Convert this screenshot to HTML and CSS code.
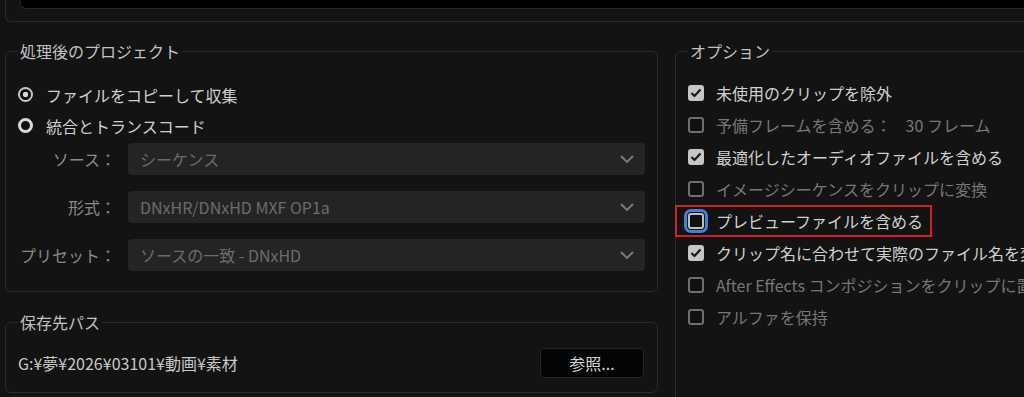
FILE: index.html
```html
<!DOCTYPE html>
<html lang="ja">
  <head>
    <meta charset="UTF-8">
    <title>プロジェクトマネージャー</title>
    <link rel="stylesheet" href="styles.css">
  </head>
  <body>

    <div class="top-group">
      <div class="top-inner"></div>
    </div>

    <div class="layout">
      <div class="left-col">

        <fieldset class="group project">
          <legend>処理後のプロジェクト</legend>
          <div class="radio-row">
            <span class="radio checked"></span>
            <span class="text">ファイルをコピーして収集</span>
          </div>
          <div class="radio-row">
            <span class="radio"></span>
            <span class="text">統合とトランスコード</span>
          </div>

          <div class="field-row">
            <span class="field-label">ソース：</span>
            <div class="select">
              <span>シーケンス</span>
              <svg class="chev" width="14" height="8" viewBox="0 0 14 8"><polyline points="1,1 7,7 13,1" fill="none" stroke="#7a7a7a" stroke-width="2"/></svg>
            </div>
          </div>
          <div class="field-row">
            <span class="field-label">形式：</span>
            <div class="select">
              <span>DNxHR/DNxHD MXF OP1a</span>
              <svg class="chev" width="14" height="8" viewBox="0 0 14 8"><polyline points="1,1 7,7 13,1" fill="none" stroke="#7a7a7a" stroke-width="2"/></svg>
            </div>
          </div>
          <div class="field-row">
            <span class="field-label">プリセット：</span>
            <div class="select">
              <span>ソースの一致 - DNxHD</span>
              <svg class="chev" width="14" height="8" viewBox="0 0 14 8"><polyline points="1,1 7,7 13,1" fill="none" stroke="#7a7a7a" stroke-width="2"/></svg>
            </div>
          </div>
        </fieldset>

        <fieldset class="group dest">
          <legend>保存先パス</legend>
          <div class="path-row">
            <span class="path">G:¥夢¥2026¥03101¥動画¥素材</span>
            <button class="browse" type="button">参照...</button>
          </div>
        </fieldset>

      </div>

      <fieldset class="group options">
        <legend>オプション</legend>
        <div class="check-row">
          <span class="check on"><svg width="12" height="10" viewBox="0 0 12 10"><polyline points="1.5,5 4.5,8 10.5,1.5" fill="none" stroke="#1a1a1a" stroke-width="2.2"/></svg></span>
          <span class="text">未使用のクリップを除外</span>
        </div>
        <div class="check-row off">
          <span class="check"></span>
          <span class="text">予備フレームを含める：<span class="frames">30 フレーム</span></span>
        </div>
        <div class="check-row">
          <span class="check on"><svg width="12" height="10" viewBox="0 0 12 10"><polyline points="1.5,5 4.5,8 10.5,1.5" fill="none" stroke="#1a1a1a" stroke-width="2.2"/></svg></span>
          <span class="text">最適化したオーディオファイルを含める</span>
        </div>
        <div class="check-row off">
          <span class="check"></span>
          <span class="text">イメージシーケンスをクリップに変換</span>
        </div>
        <div class="check-row marked">
          <span class="check focus"></span>
          <span class="text">プレビューファイルを含める</span>
        </div>
        <div class="check-row">
          <span class="check on"><svg width="12" height="10" viewBox="0 0 12 10"><polyline points="1.5,5 4.5,8 10.5,1.5" fill="none" stroke="#1a1a1a" stroke-width="2.2"/></svg></span>
          <span class="text">クリップ名に合わせて実際のファイル名を変更</span>
        </div>
        <div class="check-row off">
          <span class="check"></span>
          <span class="text">After Effects コンポジションをクリップに置き換え</span>
        </div>
        <div class="check-row off">
          <span class="check"></span>
          <span class="text">アルファを保持</span>
        </div>
      </fieldset>
    </div>

  </body>
</html>
```

FILE: styles.css
```css
html {
  box-sizing: border-box;
}

*,
*::before,
*::after {
  box-sizing: inherit;
}

body {
  margin: 0;
  height: 397px;
  overflow: hidden;
  background-color: #131313;
  color: #d0d0d0;
  font-family: "Noto Sans CJK JP", "Noto Sans", sans-serif;
  font-size: 16px;
  line-height: 20px;
  white-space: nowrap;
}

/* top group, cut off by the window */
.top-group {
  height: 22px;
  margin-left: 5px;
  border-left: 1px solid #2a2a2a;
  border-bottom: 1px solid #2a2a2a;
  border-bottom-left-radius: 6px;
}

.top-inner {
  height: 9px;
  margin-left: 14px;
  background-color: #000;
  border-left: 1px solid #1e1e1e;
  border-bottom: 1px solid #262626;
  border-bottom-left-radius: 6px;
}

.layout {
  display: grid;
  grid-template-columns: 653px 420px;
  column-gap: 17px;
  margin: 19px 0 0 5px;
}

/* group boxes */
.group {
  margin: 0;
  border: 1px solid #2a2a2a;
  border-radius: 6px;
  padding: 0 12px;
  min-width: 0;
}

.group legend {
  padding: 0 2px;
  color: #c2c2c2;
  line-height: 20px;
}

.project {
  padding-top: 18px;
  padding-bottom: 20px;
}

.dest {
  margin-top: 20px;
  padding-top: 14px;
  padding-bottom: 12px;
}

.options {
  min-height: 420px;
  padding-top: 16px;
}

/* radios */
.radio-row {
  display: flex;
  align-items: center;
  height: 31px;
}

.radio {
  width: 15px;
  height: 15px;
  margin-right: 13px;
  border: 3px solid #d8d8d8;
  border-radius: 50%;
  background-color: #111;
}

.radio.checked {
  border: 2px solid #c4c4c4;
  background: radial-gradient(circle, #d6d6d6 0 2.5px, #111 3px);
}

/* source / format / preset */
.field-row {
  display: grid;
  grid-template-columns: 98px 1fr;
  column-gap: 12px;
  align-items: center;
  height: 32px;
  margin-top: 16px;
}

.radio-row + .field-row {
  margin-top: 2px;
}

.field-label {
  text-align: right;
  color: #8a8a8a;
}

.select {
  display: flex;
  align-items: center;
  justify-content: space-between;
  height: 32px;
  padding: 0 11px 0 12px;
  background-color: #242424;
  border-radius: 4px;
  color: #6c6c6c;
}

/* destination path */
.path-row {
  display: flex;
  align-items: center;
  justify-content: space-between;
  height: 34px;
}

.path {
  color: #c8c8c8;
}

.browse {
  width: 104px;
  height: 30px;
  margin-right: 1px;
  background-color: #050505;
  border: 1px solid #262626;
  border-radius: 4px;
  color: #d6d6d6;
  font: inherit;
  padding: 0;
}

/* option checkboxes */
.check-row {
  display: flex;
  align-items: center;
  height: 32px;
}

.check {
  display: flex;
  align-items: center;
  justify-content: center;
  width: 16px;
  height: 16px;
  margin-right: 12px;
  border: 2px solid #6e6e6e;
  border-radius: 3px;
  background-color: #111;
}

.check.on {
  border-color: #c6c6c6;
  background-color: #c6c6c6;
}

.check.focus {
  border-color: #bdbdbd;
  outline: 3px solid #3f82d8;
  outline-offset: 1px;
}

.check-row.off .text {
  color: #777;
}

.check-row.marked {
  width: fit-content;
  margin-left: -13px;
  padding: 0 7px 0 11px;
  border: 2px solid #d0202a;
}

.frames {
  margin-left: 14px;
}
```
